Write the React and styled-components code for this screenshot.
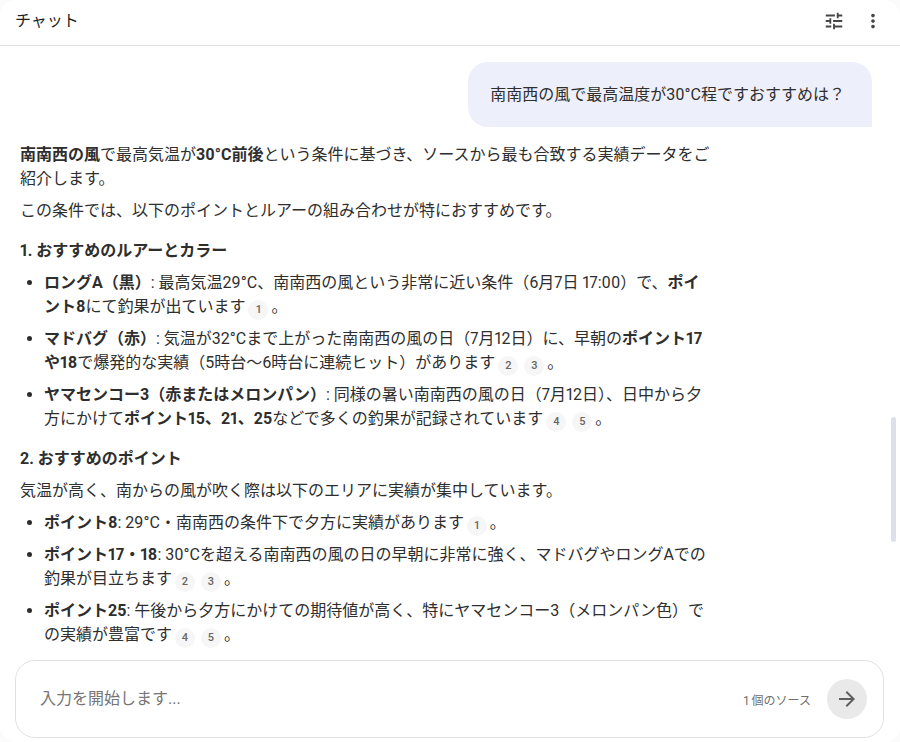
import React from 'react'
import styled, { createGlobalStyle } from 'styled-components'

const GlobalStyle = createGlobalStyle`
  html, body {
    margin: 0;
    padding: 0;
    background: #fbfbfb;
    height: 100%;
  }
  body {
    font-family: Roboto, "Noto Sans CJK JP", "Liberation Sans", sans-serif;
    font-feature-settings: "pnum" 1;
    color: #2e2e2e;
  }
`

function TuneIcon() {
  return (
    <svg width="22" height="22" viewBox="0 0 24 24" fill="currentColor">
      <path d="M3 17v2h6v-2H3zM3 5v2h10V5H3zm10 16v-2h8v-2h-8v-2h-2v6h2zM7 9v2H3v2h4v2h2V9H7zm14 4v-2H11v2h10zm-6-4h2V7h4V5h-4V3h-2v6z" />
    </svg>
  )
}

function MoreIcon() {
  return (
    <svg width="22" height="22" viewBox="0 0 24 24" fill="currentColor">
      <path d="M12 8c1.1 0 2-.9 2-2s-.9-2-2-2-2 .9-2 2 .9 2 2 2zm0 2c-1.1 0-2 .9-2 2s.9 2 2 2 2-.9 2-2-.9-2-2-2zm0 6c-1.1 0-2 .9-2 2s.9 2 2 2 2-.9 2-2-.9-2-2-2z" />
    </svg>
  )
}

function ArrowIcon() {
  return (
    <svg width="24" height="24" viewBox="0 0 24 24" fill="currentColor">
      <path d="M12 4l-1.41 1.41L16.17 11H4v2h12.17l-5.58 5.59L12 20l8-8z" />
    </svg>
  )
}

function Cite({ n }) {
  return <Chip>{n}</Chip>
}

export default function App() {
  return (
    <Page>
      <GlobalStyle />
      <Header>
        <Title>チャット</Title>
        <HeaderIcons>
          <IconSlot><TuneIcon /></IconSlot>
          <IconSlot><MoreIcon /></IconSlot>
        </HeaderIcons>
      </Header>
      <Messages>
        <UserRow>
          <Bubble>南南西の風で最高温度が30°C程ですおすすめは？</Bubble>
        </UserRow>
        <Answer>
          <Para>
            <b>南南西の風</b>で最高気温が<b>30°C前後</b>という条件に基づき、ソースから最も合致する実績データをご紹介します。
          </Para>
          <Para>この条件では、以下のポイントとルアーの組み合わせが特におすすめです。</Para>
          <Heading>1. おすすめのルアーとカラー</Heading>
          <List>
            <Item>
              <b>ロングA（黒）</b>: 最高気温29°C、南南西の風という非常に近い条件（6月7日 17:00）で、<b>ポイント8</b>にて釣果が出ています <Cite n="1" />。
            </Item>
            <Item>
              <b>マドバグ（赤）</b>: 気温が32°Cまで上がった南南西の風の日（7月12日）に、早朝の<b>ポイント17や18</b>で爆発的な実績（5時台〜6時台に連続ヒット）があります <Cite n="2" /> <Cite n="3" />。
            </Item>
            <Item>
              <b>ヤマセンコー3（赤またはメロンパン）</b>: 同様の暑い南南西の風の日（7月12日）、日中から夕方にかけて<b>ポイント15、21、25</b>などで多くの釣果が記録されています <Cite n="4" /> <Cite n="5" />。
            </Item>
          </List>
          <Heading>2. おすすめのポイント</Heading>
          <Para>気温が高く、南からの風が吹く際は以下のエリアに実績が集中しています。</Para>
          <List>
            <Item>
              <b>ポイント8</b>: 29°C・南南西の条件下で夕方に実績があります <Cite n="1" />。
            </Item>
            <Item>
              <b>ポイント17・18</b>: 30°Cを超える南南西の風の日の早朝に非常に強く、マドバグやロングAでの釣果が目立ちます <Cite n="2" /> <Cite n="3" />。
            </Item>
            <Item>
              <b>ポイント25</b>: 午後から夕方にかけての期待値が高く、特にヤマセンコー3（メロンパン色）での実績が豊富です <Cite n="4" /> <Cite n="5" />。
            </Item>
          </List>
        </Answer>
        <ScrollThumb />
      </Messages>
      <Footer>
        <Composer>
          <Placeholder>入力を開始します...</Placeholder>
          <SourceCount>1 個のソース</SourceCount>
          <SendButton><ArrowIcon /></SendButton>
        </Composer>
      </Footer>
    </Page>
  )
}

const Page = styled.div`
  height: 742px;
  width: 900px;
  display: flex;
  flex-direction: column;
  overflow: hidden;
  background: #fff;
  border-radius: 16px;
`

const Header = styled.div`
  height: 45px;
  flex: none;
  display: flex;
  align-items: center;
  justify-content: space-between;
  padding: 0 16px 0 15px;
  border-bottom: 1px solid #e0e0e0;
`

const Title = styled.div`
  font-size: 16px;
  color: #1f1f1f;
  padding-bottom: 7px;
`

const HeaderIcons = styled.div`
  display: flex;
  align-items: center;
  gap: 17px;
  padding-bottom: 4px;
`

const IconSlot = styled.div`
  width: 22px;
  height: 22px;
  color: #444746;
  display: flex;
`

const Messages = styled.div`
  position: relative;
  flex: 1;
  min-height: 0;
  overflow: hidden;
  padding: 16px 28px 0 20px;
`

const UserRow = styled.div`
  display: flex;
  justify-content: flex-end;
`

const Bubble = styled.div`
  background: #edeffa;
  border-radius: 20px 20px 0 20px;
  padding: 20px 27px 20px 22px;
  font-size: 16px;
  line-height: 25px;
  color: #2e2e2e;
`

const Answer = styled.div`
  width: 691px;
  margin-top: 16px;
  font-size: 16px;
  line-height: 24px;
  color: #2e2e2e;

  b {
    font-weight: 700;
  }
`

const Para = styled.p`
  margin: 0 0 8px;
`

const Heading = styled.h3`
  margin: 16px 0 8px;
  font-size: 16px;
  line-height: 24px;
  font-weight: 700;
`

const List = styled.ul`
  margin: 0;
  padding: 0 0 0 24px;
  list-style: disc;
`

const Item = styled.li`
  margin-bottom: 8px;
`

// negative block margins keep the chip from stretching its text line
const Chip = styled.span`
  display: inline-flex;
  align-items: center;
  justify-content: center;
  width: 20px;
  height: 20px;
  margin: -6px 3px -6px -1px;
  border-radius: 50%;
  background: #f6f6f6;
  color: #666;
  font-size: 11px;
  line-height: 20px;
  font-weight: 500;
  vertical-align: -1px;
`

const ScrollThumb = styled.div`
  position: absolute;
  right: 4px;
  top: 371px;
  width: 5px;
  height: 125px;
  border-radius: 3px;
  background: #dde0ea;
`

const Footer = styled.div`
  flex: none;
  height: 78px;
  padding: 0 16px 4px 15px;
  background: #fff;
  position: relative;
`

const Composer = styled.div`
  box-sizing: border-box;
  height: 78px;
  display: flex;
  align-items: center;
  padding: 0 16px 0 24px;
  border: 1px solid #e0e0e0;
  border-radius: 20px;
  background: #fff;
`

const Placeholder = styled.div`
  flex: 1;
  font-size: 16px;
  color: #757575;
  padding-bottom: 5px;
`

const SourceCount = styled.div`
  font-size: 12px;
  color: #6f6f6f;
  margin-right: 16px;
`

const SendButton = styled.div`
  width: 40px;
  height: 40px;
  border-radius: 50%;
  background: #e9e9e9;
  color: #5f5f5f;
  display: flex;
  align-items: center;
  justify-content: center;
`
